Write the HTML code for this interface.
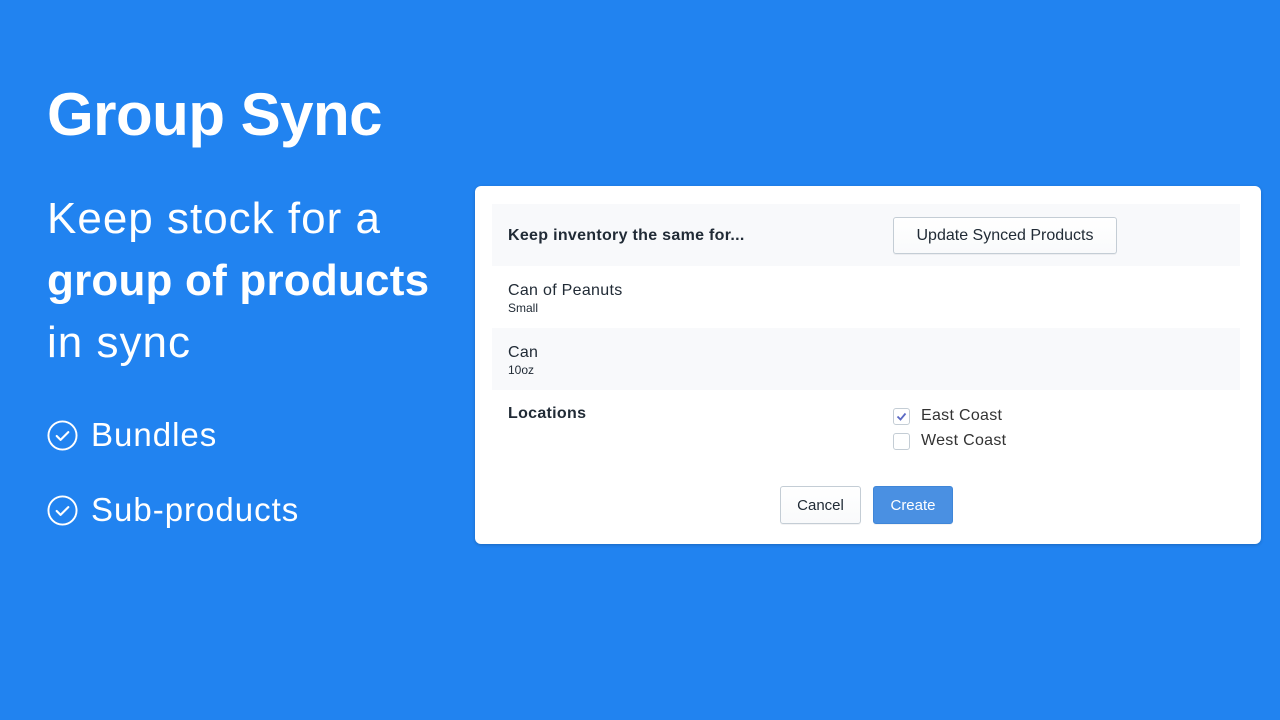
<!DOCTYPE html>
<html><head><style>
*{margin:0;padding:0;box-sizing:border-box}
body{width:1280px;height:720px;background:#2183f0;font-family:"Liberation Sans",sans-serif;position:relative;overflow:hidden;color:#fff}
h1{position:absolute;left:47px;top:80px;font-size:60px;font-weight:bold;letter-spacing:-0.5px}
.sub{position:absolute;left:47px;top:188px;font-size:44px;line-height:62px;letter-spacing:1px}
.sub b{letter-spacing:0.2px}
.li{position:absolute;left:47px;font-size:33px;letter-spacing:1px;display:flex;align-items:center}
.li svg{margin-right:13px}
.card{position:absolute;left:475px;top:186px;width:786px;height:358px;background:#fff;border-radius:6px;color:#212b36;box-shadow:0 1px 3px rgba(0,0,0,.2)}
.row{position:absolute;left:17px;width:748px;height:62px}
.g{background:#f8f9fb}
.t{position:absolute;left:16px;font-size:16px;letter-spacing:0.3px}
.s{position:absolute;left:16px;font-size:12px}
.btn{position:absolute;border:1px solid #c4cdd5;border-radius:3px;background:linear-gradient(#fff,#f9fafb);font-size:16px;color:#212b36;display:flex;align-items:center;justify-content:center;box-shadow:0 1px 0 rgba(22,29,37,.05)}
.cb{position:absolute;width:17px;height:17px;border:1px solid #c4cdd5;border-radius:3px;background:#fff}
</style></head><body>
<h1>Group Sync</h1>
<div class="sub">Keep stock for a<br><b>group of products</b><br>in sync</div>
<div class="li" style="top:416px"><svg width="31" height="31" viewBox="0 0 32 32"><circle cx="16" cy="16" r="14.5" fill="none" stroke="#fff" stroke-width="2"/><path d="M10 16.5l4 4 8-8" fill="none" stroke="#fff" stroke-width="2.2" stroke-linecap="round" stroke-linejoin="round"/></svg>Bundles</div>
<div class="li" style="top:491px"><svg width="31" height="31" viewBox="0 0 32 32"><circle cx="16" cy="16" r="14.5" fill="none" stroke="#fff" stroke-width="2"/><path d="M10 16.5l4 4 8-8" fill="none" stroke="#fff" stroke-width="2.2" stroke-linecap="round" stroke-linejoin="round"/></svg>Sub-products</div>
<div class="card">
 <div class="row g" style="top:18px"><div class="t" style="top:23px;font-weight:bold">Keep inventory the same for...</div>
  <div class="btn" style="left:401px;top:13px;width:224px;height:37px">Update Synced Products</div></div>
 <div class="row" style="top:80px"><div class="t" style="top:16px">Can of Peanuts</div><div class="s" style="top:35px">Small</div></div>
 <div class="row g" style="top:142px"><div class="t" style="top:16px">Can</div><div class="s" style="top:35px">10oz</div></div>
 <div class="t" style="left:33px;top:219px;font-weight:bold">Locations</div>
 <div class="cb" style="left:418px;top:222px"><svg width="15" height="15" viewBox="0 0 15 15"><path d="M3.5 7.5l3 3 5-6" fill="none" stroke="#5c6ac4" stroke-width="1.8"/></svg></div>
 <div class="t" style="left:446px;top:221px;color:#333">East Coast</div>
 <div class="cb" style="left:418px;top:247px"></div>
 <div class="t" style="left:446px;top:246px;color:#333">West Coast</div>
 <div class="btn" style="left:305px;top:300px;width:81px;height:38px;font-size:15px">Cancel</div>
 <div class="btn" style="left:398px;top:300px;width:80px;height:38px;font-size:15px;background:#4a90e2;border-color:#3f86d8;color:#fff">Create</div>
</div>
</body></html>
